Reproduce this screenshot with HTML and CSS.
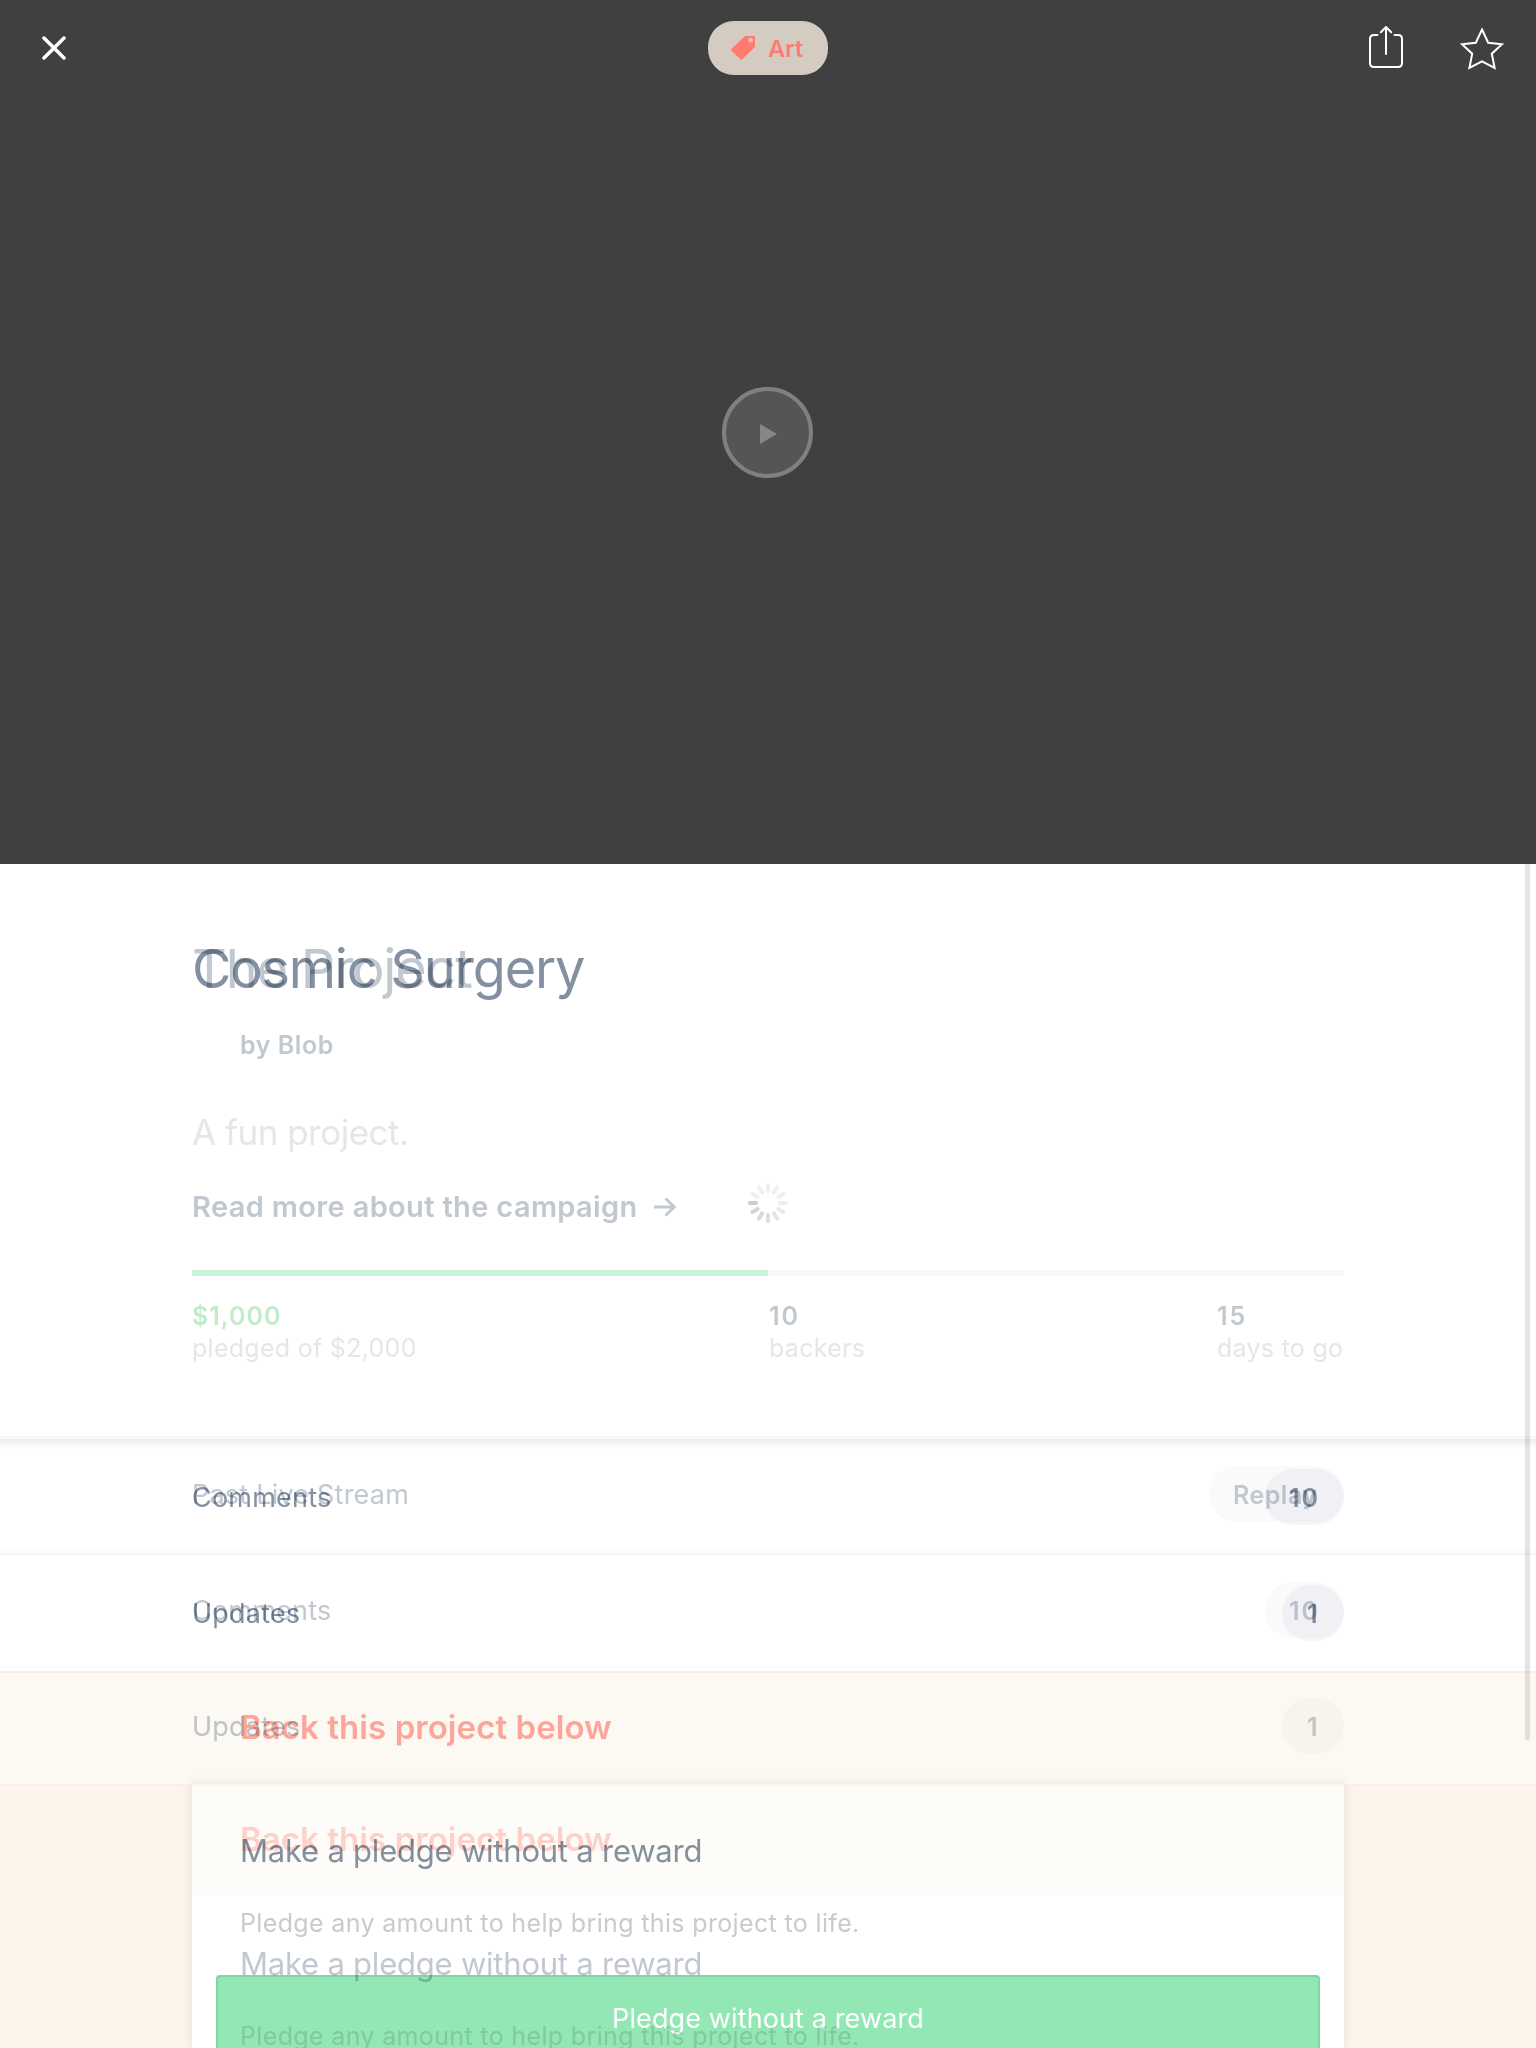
FILE: index.html
```html
<!DOCTYPE html>
<html lang="en">
<head>
<meta charset="utf-8">
<title>Cosmic Surgery</title>
<link rel="stylesheet" href="styles.css">
</head>
<body>
<main class="page">
  <header class="hero">
    <nav class="toolbar">
      <svg class="close" width="24" height="24" viewBox="0 0 24 24"><path d="M2 2 22 22M22 2 2 22"/></svg>
      <div class="category">
        <svg width="24" height="24" viewBox="0 0 24 24"><path fill-rule="evenodd" d="M14 0H23.200Q24 0 24 .8V11L11 23.600Q10.300 24.300 9.600 23.600L.4 14.400Q-.3 13.700 .4 13ZM19.700 2A2.300 2.300 0 1 0 19.700 6.600A2.300 2.300 0 1 0 19.700 2Z"/></svg>
        <span class="t art">Art</span>
      </div>
      <div class="actions">
        <svg class="share" width="36" height="44" viewBox="0 0 36 44"><path d="M9.500 10H6Q2 10 2 14V38Q2 42 6 42H30Q34 42 34 38V14Q34 10 30 10H26.500M18 29V2.500M12.800 7.200 18 2 23.200 7.200"/></svg>
        <svg class="star" width="44" height="44" viewBox="0 0 44 44"><path d="M22 3.500 28.200 16.700 42 18.300 31.800 27.700 34.600 42 22 35.300 9.400 42 12.200 27.700 2 18.300 15.800 16.700Z"/></svg>
      </div>
    </nav>
    <div class="play"><svg width="18" height="20" viewBox="0 0 18 20"><path d="M0 0 17 10 0 20Z"/></svg></div>
  </header>

  <section class="summary">
    <div class="stack title">
      <span class="t title-old">The Project</span>
      <h1 class="t title-new">Cosmic Surgery</h1>
    </div>
    <div class="byline"><span class="t">by Blob</span></div>
    <div class="blurb"><span class="t">A fun project.</span></div>
    <div class="more"><span class="t read">Read more about the campaign</span>
      <svg class="arrow" width="23" height="20" viewBox="0 0 23 20"><path d="M0 10H20M11.500 1.500 20.300 10 11.500 18.500"/></svg>
      <svg class="spinner" width="40" height="40" viewBox="-20 -20 40 40">
        <g><path stroke="#efefef" d="M0-12V-18"/><path stroke="#efefef" d="M0-12V-18" transform="rotate(30)"/><path stroke="#efefef" d="M0-12V-18" transform="rotate(60)"/><path stroke="#eeeeee" d="M0-12V-18" transform="rotate(90)"/><path stroke="#e9e9e9" d="M0-12V-18" transform="rotate(120)"/><path stroke="#e4e4e4" d="M0-12V-18" transform="rotate(150)"/><path stroke="#dedede" d="M0-12V-18" transform="rotate(180)"/><path stroke="#d8d8d8" d="M0-12V-18" transform="rotate(210)"/><path stroke="#d3d3d3" d="M0-12V-18" transform="rotate(240)"/><path stroke="#cccccc" d="M0-12V-18" transform="rotate(270)"/><path stroke="#efefef" d="M0-12V-18" transform="rotate(300)"/><path stroke="#efefef" d="M0-12V-18" transform="rotate(330)"/></g>
      </svg>
    </div>
    <div class="progress"><div class="progress-fill" style="width:50%"></div></div>
    <div class="stats">
      <div class="stat"><b class="t amount">$1,000</b><span class="t">pledged of $2,000</span></div>
      <div class="stat"><b class="t">10</b><span class="t">backers</span></div>
      <div class="stat"><b class="t">15</b><span class="t">days to go</span></div>
    </div>
  </section>

  <section class="stack row row-first">
    <div class="layer old"><span class="t label">Past Live Stream</span><span class="pill pill-replay"><b class="t replay">Replay</b></span></div>
    <div class="layer new"><span class="t label">Comments</span><span class="pill pill-two"><b class="t count">10</b></span></div>
  </section>
  <section class="stack row">
    <div class="layer old"><span class="t label">Comments</span><span class="pill pill-two"><b class="t count">10</b></span></div>
    <div class="layer new"><span class="t label">Updates</span><span class="pill pill-one"><b class="t count">1</b></span></div>
  </section>
  <section class="stack row row-back">
    <div class="layer old"><span class="t label">Updates</span><span class="pill pill-one"><b class="t count">1</b></span></div>
    <h2 class="back-new"><span class="t back">Back this project below</span></h2>
  </section>

  <section class="rewards">
    <div class="stack card">
      <div class="reward new">
        <h3 class="t make">Make a pledge without a reward</h3>
        <p class="t any">Pledge any amount to help bring this project to life.</p>
        <div class="button"><span class="t">Pledge without a reward</span></div>
      </div>
      <div class="reward old">
        <h2 class="t back">Back this project below</h2>
        <h3 class="t make">Make a pledge without a reward</h3>
        <p class="t any">Pledge any amount to help bring this project to life.</p>
      </div>
    </div>
  </section>
  <div class="scrollbar"></div>
</main>
</body>
</html>
```
FILE: styles.css
```css
* { box-sizing: border-box; }
body, h1, h2, h3, p { margin: 0; }
body { background: #fff; font-family: Inter, "Liberation Sans", sans-serif; }
h1, h2, h3 { font-weight: 400; }
svg { display: block; fill: none; flex: none; }
.page { position: relative; width: 1536px; height: 2048px; overflow: hidden; }
.t { white-space: pre; }
.stack { display: grid; }
.stack > * { grid-area: 1 / 1; }

/* Video header */
.hero { height: 864px; background: #404040; }
.toolbar { display: grid; grid-template-columns: 1fr 120px 1fr; align-items: start; padding: 21px 32px 0 42px; height: 387px; }
.close { margin-top: 15px; stroke: #fff; stroke-width: 3.5; stroke-linecap: round; }
.category { display: flex; align-items: center; gap: 12px; height: 54px; padding-left: 23px; border-radius: 26px; background: #d4ccc0; margin-left: -5px; margin-right: 5px; }
.category svg { fill: #ff7b70; }
.art { margin-left: 1px; font-size: 23.5px; font-weight: 600; color: #ff7b70; }
.actions { display: flex; justify-content: flex-end; gap: 56px; margin-top: 4px; }
.share { stroke: #fff; stroke-width: 2; stroke-linecap: round; stroke-linejoin: round; }
.star { stroke: #fff; stroke-width: 2; margin-top: 1px; }
.play { display: flex; align-items: center; justify-content: center; width: 91px; height: 91px; margin-left: 722px; border: 4px solid #808080; border-radius: 50%; background: #555; }
.play svg { fill: #878787; margin: 3px 0 0 3px; }

/* Project summary */
.summary { height: 575px; padding: 72px 192px 0; border-bottom: 3px solid #f9f9f9; background: #fff; }
.title { font-size: 54px; line-height: 66px; letter-spacing: -1.2px; justify-items: start; }
.title-old { color: #c1c8d0; }
.title-new { font-size: inherit; color: #8290a1; mix-blend-mode: multiply; }
.byline { margin-top: 28px; padding-left: 48px; font-size: 25px; line-height: 30px; letter-spacing: .55px; font-weight: 600; color: #c1c8d0; }
.blurb { margin-top: 51px; font-size: 35px; line-height: 42px; letter-spacing: -.5px; color: #e6e6e6; }
.more { display: flex; align-items: center; margin-top: 36px; height: 36px; font-size: 29px; line-height: 36px; letter-spacing: .35px; font-weight: 600; color: #c1c8d0; }
.read { width: 462px; }
.arrow { stroke: #c1c8d0; stroke-width: 2.8; }
.spinner { margin: -8px 0 0 71px; stroke-width: 4; stroke-linecap: round; }
.progress { margin-top: 45px; height: 6px; background: #f5f7f9; }
.progress-fill { height: 6px; background: #c9f2db; }
.stats { display: grid; grid-template-columns: 577px 1fr 127px; margin-top: 24px; font-size: 25px; line-height: 32px; letter-spacing: .28px; color: #e6e6e6; }
.stat { display: flex; flex-direction: column; align-items: flex-start; }
.stat b { font-weight: 600; letter-spacing: 2px; color: #c1c8d0; }
.stat .amount { letter-spacing: 1px; color: #c0ecca; }

/* Subpage rows */
.row { height: 116px; padding: 0 192px; background: linear-gradient(#fcfcfc, #fcfcfc) 0 111px / 100% 2px no-repeat #fff; }
.row-first { background: linear-gradient(#ededed, #fff) 0 0 / 100% 10px no-repeat, linear-gradient(#fcfcfc, #fcfcfc) 0 111px / 100% 2px no-repeat #fff; border-bottom: 2px solid #f5f5f6; }
.layer { display: flex; align-items: center; justify-content: space-between; height: 56px; margin-top: 30px; mix-blend-mode: multiply; }
.layer.old { margin-top: 27px; }
.label { padding-top: 2px; font-size: 27px; line-height: 34px; letter-spacing: .22px; }
.new .label, .new .count { color: #8290a1; }
.old .label, .old .count, .replay { color: #c1c8d0; }
.pill { display: flex; align-items: center; height: 56px; padding: 1px 0 0 24px; border-radius: 28px; font-size: 25px; background: #fafafb; }
.new .pill { background: #f6f6f9; }
.pill b { font-weight: 600; letter-spacing: 2px; }
.pill .replay { letter-spacing: .5px; }
.pill-replay { width: 135px; }
.pill-two { width: 79px; }
.pill-one { width: 62px; padding-left: 25px; }
.row-back { height: 113px; border-top: 2px solid #fdece6; background: #fcf9f2; }
.row-back .layer { margin-top: 25px; }
.back-new { margin: 34px 0 0 48px; mix-blend-mode: multiply; }
.back { font-size: 33px; line-height: 40px; letter-spacing: .06px; font-weight: 600; color: #ffaaa3; }

/* Rewards */
.rewards { height: 264px; padding: 0 192px; border-top: 2px solid #fcefe5; background: #fdf4eb; }
.card { height: 264px; margin-top: -2px; background: linear-gradient(#fdf5f2 2px, #fdfcf8 2px, #fdfcf8 106px, #fbfbf8 106px, #fbfbf8 112px, #fff 112px); box-shadow: 0 0 9px rgba(70, 80, 60, .13); }
.reward { display: flex; flex-direction: column; }
.reward.new { padding-top: 48px; }
.reward.old { padding-top: 35px; mix-blend-mode: multiply; }
.reward > .t { margin-left: 48px; }
.make { font-size: 31px; line-height: 38px; letter-spacing: -.22px; color: #84909d; }
.any { margin-top: 38px; font-size: 25px; line-height: 30px; letter-spacing: .35px; color: #cacacf; }
.old .make { margin-top: 86px; color: #c1c8d0; }
.old .back { color: #ffd4cf; }
.old .any { color: #dde0df; }
.button { display: flex; justify-content: center; height: 96px; margin: 37px 24px 0; padding-top: 25px; border: 2px solid #7fd89f; border-radius: 4px; background: #92e7b5; font-size: 27px; line-height: 34px; letter-spacing: .12px; color: #fff; }

.scrollbar { position: absolute; left: 1525px; top: 860px; width: 5px; height: 880px; border-radius: 3px; background: rgba(0, 0, 0, .1); clip-path: inset(4px 0 0 0); }
```
